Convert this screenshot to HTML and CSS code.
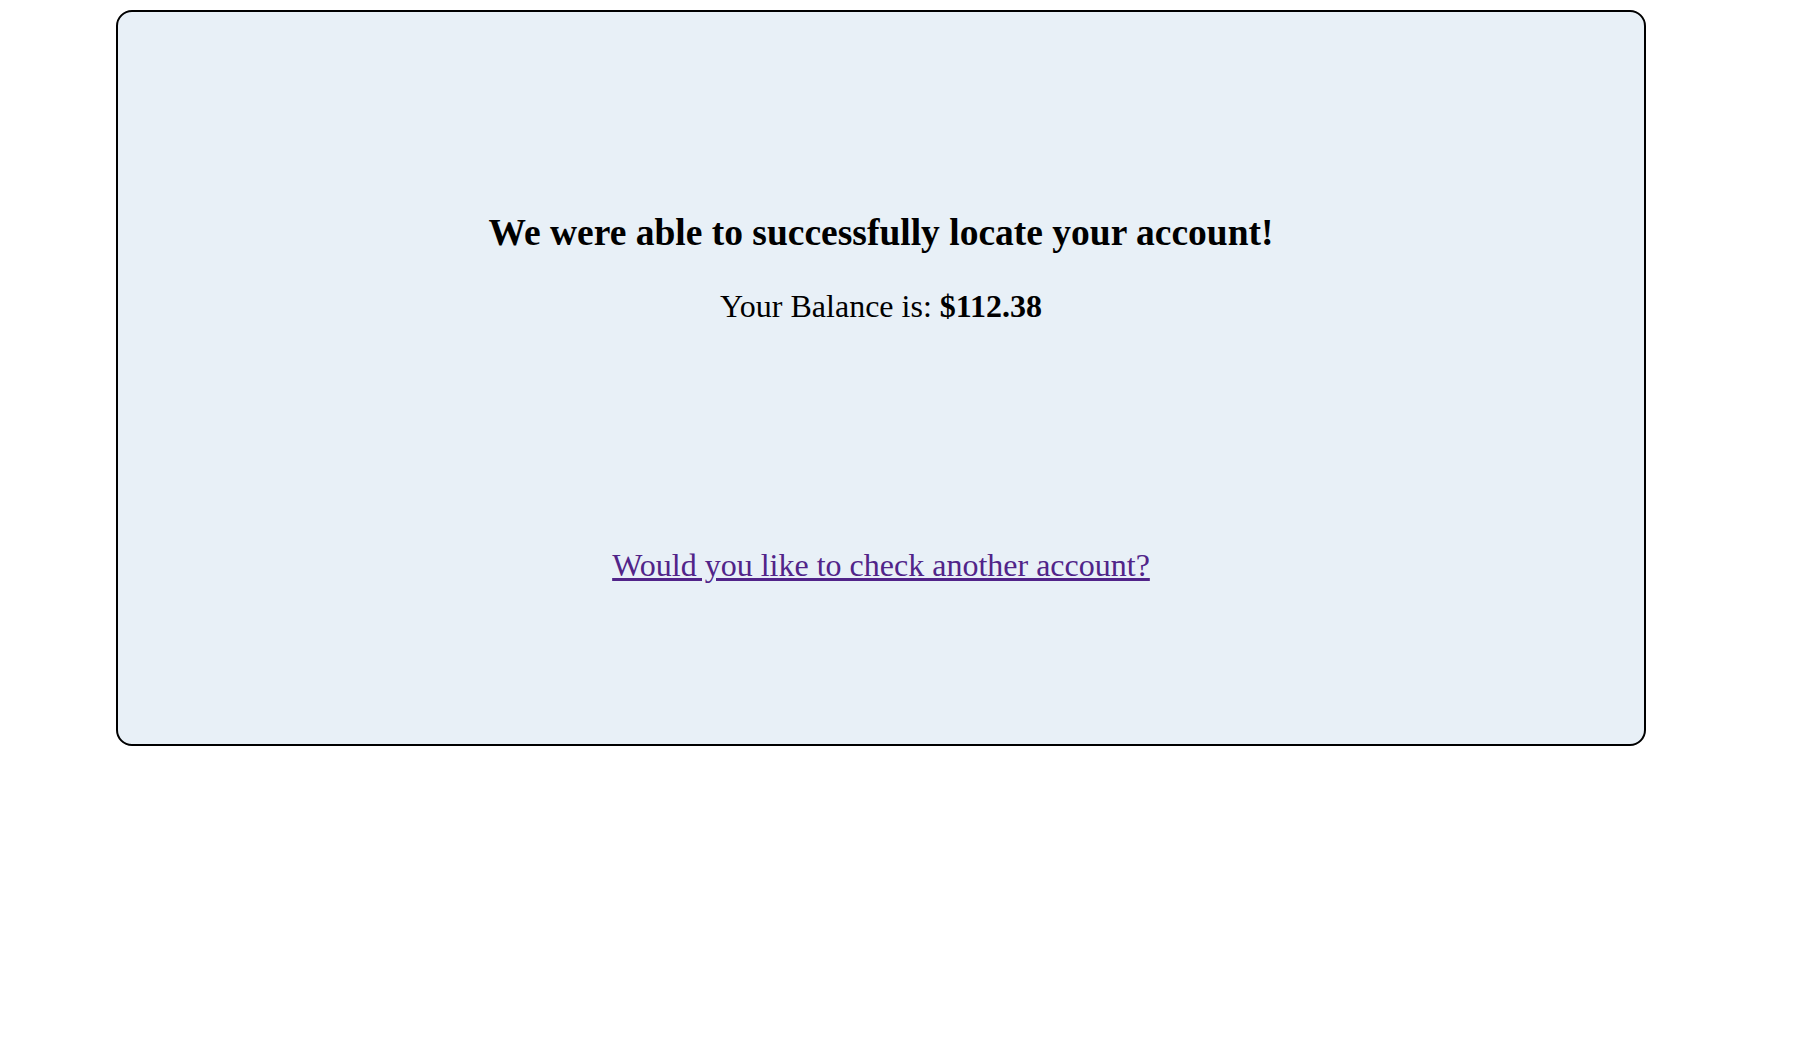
FILE: index.html
```html
<!DOCTYPE html>
<html>
<head>
<meta charset="utf-8">
<link rel="stylesheet" href="styles.css">
</head>
<body>
<div class="card">
  <h2 class="title">We were able to successfully locate your account!</h2>
  <p class="balance">Your Balance is: <b>$112.38</b></p>
  <a class="again" href="#">Would you like to check another account?</a>
</div>
</body>
</html>
```
FILE: styles.css
```css
html, body {
  margin: 0;
  padding: 0;
  background: #ffffff;
}
body {
  padding: 10px 0 0 116px;
  font-family: "Liberation Serif", "Times New Roman", serif;
  color: #000;
}
.card {
  box-sizing: border-box;
  width: 1530px;
  height: 736px;
  border: 2px solid #000;
  border-radius: 16px;
  background: #e8f0f7;
  padding-top: 198px;
  display: flex;
  flex-direction: column;
  align-items: center;
}
.title {
  margin: 0;
  font-size: 37.5px;
  line-height: 1.2;
  font-weight: bold;
}
.balance {
  margin: 32px 0 0;
  font-size: 32px;
  line-height: 1.2;
}
.again {
  margin-top: 220.6px;
  font-size: 32px;
  line-height: 1.2;
  color: #512489;
  text-decoration: underline;
}
```
